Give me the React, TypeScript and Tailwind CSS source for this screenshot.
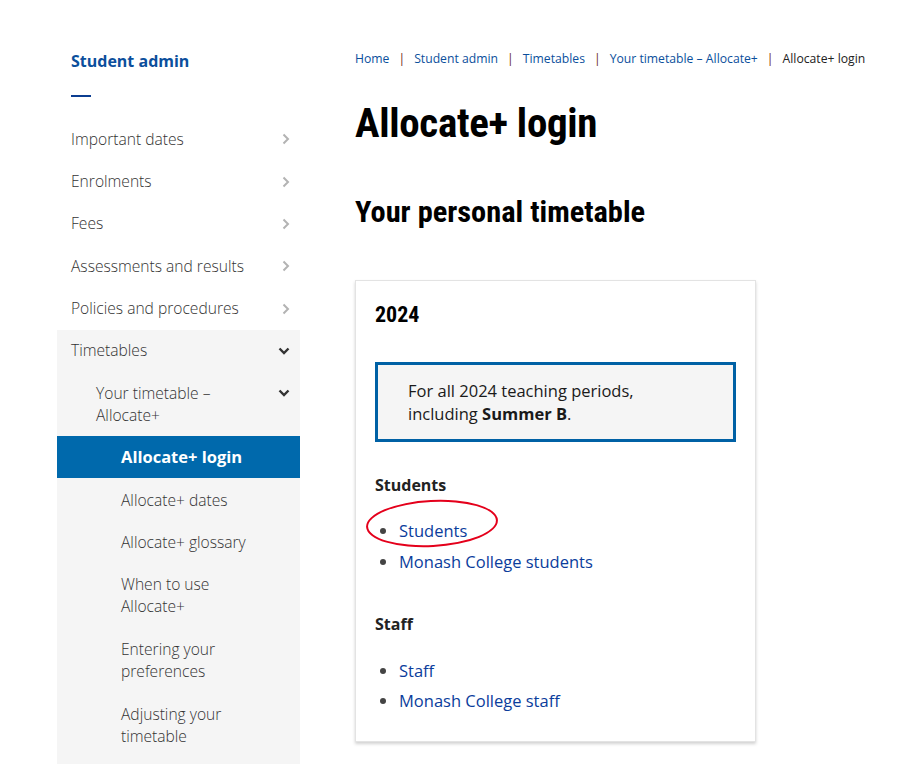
import React from "react";

const body = { fontFamily: '"Segoe UI", "Open Sans", "Noto Sans", sans-serif' };
const head = { fontFamily: '"Roboto Condensed", Roboto, "Liberation Sans Narrow", sans-serif' };

function ChevronRight() {
  return (
    <svg width="8" height="12" viewBox="0 0 8 12" className="shrink-0">
      <path d="M1.5 1.5 L6 6 L1.5 10.5" fill="none" stroke="#b3b3b3" strokeWidth="2" />
    </svg>
  );
}

function ChevronDown() {
  return (
    <svg width="12" height="8" viewBox="0 0 12 8" className="shrink-0">
      <path d="M1.5 1.5 L6 6 L10.5 1.5" fill="none" stroke="#333" strokeWidth="2.4" />
    </svg>
  );
}

const topItems = [
  "Important dates",
  "Enrolments",
  "Fees",
  "Assessments and results",
  "Policies and procedures",
];

const subItems: string[][] = [
  ["Allocate+ dates"],
  ["Allocate+ glossary"],
  ["When to use", "Allocate+"],
  ["Entering your", "preferences"],
  ["Adjusting your", "timetable"],
];

const crumbs = ["Home", "Student admin", "Timetables", "Your timetable – Allocate+"];

export default function App() {
  return (
    <div className="min-h-[764px] bg-white flex" style={body}>
      {/* sidebar navigation */}
      <aside className="ml-[57px] w-[243px] shrink-0 pt-[50px]">
        <div className="px-[14px]">
          <div className="text-[16px] font-bold text-[#0b4f9c] leading-[22px]">Student admin</div>
          <div className="mt-[23px] w-[20px] h-[2px] bg-[#0b3d91]" />
        </div>
        <ul className="mt-[21px] text-[15.6px] font-light text-[#333]">
          {topItems.map((t) => (
            <li key={t} className="h-[42.4px] flex items-center justify-between pl-[14px] pr-[10px]">
              <span>{t}</span>
              <ChevronRight />
            </li>
          ))}
          <li className="bg-[#f5f5f5] pb-[30px]">
            <div className="h-[42px] flex items-center justify-between pl-[14px] pr-[10px]">
              <span>Timetables</span>
              <ChevronDown />
            </div>
            <div className="flex justify-between pl-[39px] pr-[10px] pt-[10px] pb-[10px] leading-[22px]">
              <span>
                Your timetable –<br />
                Allocate+
              </span>
              <span className="pt-[7px]">
                <ChevronDown />
              </span>
            </div>
            <div className="h-[42px] bg-[#0069ac] text-white font-bold flex items-center pl-[64px] text-[16.5px]">
              Allocate+ login
            </div>
            {subItems.map((lines) => (
              <div
                key={lines.join(" ")}
                className={
                  lines.length > 1
                    ? "pl-[64px] pr-[10px] pt-[11px] pb-[10px] leading-[22px]"
                    : "pl-[64px] pr-[10px] pt-[11px] pb-[9px] leading-[22px]"
                }
              >
                {lines.map((l, i) => (
                  <div key={i}>{l}</div>
                ))}
              </div>
            ))}
          </li>
        </ul>
      </aside>

      {/* main content */}
      <main className="ml-[55px] pt-[50px] flex-1">
        <nav className="text-[12.2px] leading-[18px] flex items-center whitespace-nowrap">
          {crumbs.map((c) => (
            <React.Fragment key={c}>
              <span className="text-[#0b4f9c]">{c}</span>
              <span className="mx-[9px] text-[#6b2a1a]">|</span>
            </React.Fragment>
          ))}
          <span className="text-[#222]">Allocate+ login</span>
        </nav>

        <h1 className="mt-[31px] text-[41px] font-bold leading-[48px] text-black tracking-[-0.3px]" style={head}>
          Allocate+ login
        </h1>
        <h2 className="mt-[47px] text-[30.4px] font-bold leading-[36px] text-black" style={head}>
          Your personal timetable
        </h2>

        <section className="mt-[50px] w-[401px] border border-[#e3e3e3] shadow-[0_2px_3px_rgba(0,0,0,0.18)] px-[19px] pt-[20px] pb-[25px]">
          <h3 className="text-[22px] font-bold leading-[28px] text-black" style={head}>
            2024
          </h3>
          <div className="mt-[33px] border-[3px] border-[#0061a5] bg-[#f5f5f5] pl-[30px] pr-[10px] py-[14px] text-[16.5px] leading-[23px] text-[#1a1a1a]">
            For all 2024 teaching periods,
            <br />
            including <strong className="font-bold">Summer B</strong>.
          </div>

          <h4 className="mt-[32px] text-[16px] font-bold text-[#222] leading-[22px]">Students</h4>
          <ul className="mt-[19px] list-disc pl-[24px] text-[16.5px] leading-[31px] text-[#0b3d9c] marker:text-[#444]">
            <li className="relative">
              Students
              <span className="absolute left-[-33px] top-[-15px] w-[132px] h-[47px] rounded-[50%] border-[2.5px] border-[#e4001b] -rotate-[3deg]" />
            </li>
            <li>Monash College students</li>
          </ul>

          <h4 className="mt-[36px] text-[16px] font-bold text-[#222] leading-[22px]">Staff</h4>
          <ul className="mt-[21px] list-disc pl-[24px] text-[16.5px] leading-[30px] text-[#0b3d9c] marker:text-[#444]">
            <li>Staff</li>
            <li>Monash College staff</li>
          </ul>
        </section>
      </main>
    </div>
  );
}
